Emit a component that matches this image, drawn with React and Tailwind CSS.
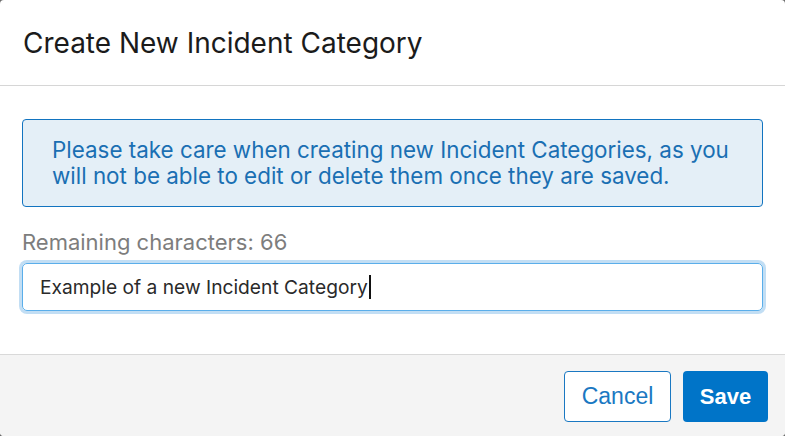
export default function App() {
  return (
    <div className="w-[785px] h-[436px] bg-[#6b6b6b] overflow-hidden" style={{ fontFamily: 'Inter, "Noto Sans", sans-serif' }}>
      <div className="w-full h-full bg-white rounded-[4px] flex flex-col overflow-hidden">
        <div className="h-[86px] border-b border-[#d6d6d6] flex items-center px-[23px]">
          <h1 className="text-[28px] text-[#1b1b1b] leading-none">Create New Incident Category</h1>
        </div>
        <div className="flex-1 px-[22px] pt-[33px]">
          <div className="h-[88px] border border-[#1274c0] bg-[#e4eff7] rounded-[4px] px-[29px] flex items-center">
            <p className="text-[22.4px] leading-[26px] text-[#1a6fb3]">
              Please take care when creating new Incident Categories, as you will not be able to edit or delete them once they are saved.
            </p>
          </div>
          <div className="mt-[22px] text-[22px] leading-[26px] text-[#7d7d7d]">Remaining characters: 66</div>
          <div className="mt-[8px] h-[48px] rounded-[5px] border border-[#5aaeea] ring-[3px] ring-[#c2def4] flex items-center px-[17px]">
            <span className="text-[19.2px] text-[#2a2a2a]">Example of a new Incident Category</span>
            <span className="w-[2px] h-[24px] bg-[#111] ml-[1px]" />
          </div>
        </div>
        <div className="h-[82px] border-t border-[#d9d9d9] bg-[#f4f4f4] flex items-center justify-end gap-[12px] pr-[17px] pt-[1px]" style={{ fontFamily: '"Liberation Sans", Arial, sans-serif' }}>
          <button className="w-[107px] h-[51px] rounded-[4px] border border-[#1a78c2] bg-white text-[#1a78c2] text-[23px]">Cancel</button>
          <button className="w-[85px] h-[51px] rounded-[4px] bg-[#0074c8] text-white font-bold text-[22px]">Save</button>
        </div>
      </div>
    </div>
  );
}
